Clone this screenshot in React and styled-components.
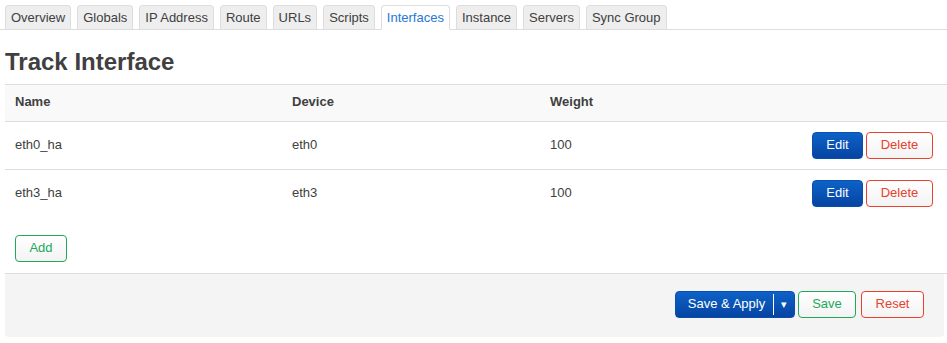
import styled, { createGlobalStyle } from 'styled-components';

const GlobalStyle = createGlobalStyle`
    body {
        margin: 0;
        background: #fff;
        font-family: "Liberation Sans", Arial, sans-serif;
        font-size: 13px;
        color: #404040;
    }
`;

const tabs = ['Overview', 'Globals', 'IP Address', 'Route', 'URLs', 'Scripts', 'Interfaces', 'Instance', 'Servers', 'Sync Group'];

const rows = [
    { name: 'eth0_ha', device: 'eth0', weight: '100' },
    { name: 'eth3_ha', device: 'eth3', weight: '100' },
];

const App = () => {
    return (
        <Page>
            <GlobalStyle />
            <TabBar>
                {tabs.map((t) => (
                    <Tab key={t} $active={t === 'Interfaces'}>{t}</Tab>
                ))}
            </TabBar>
            <Title>Track Interface</Title>
            <Table>
                <HeadRow>
                    <HeadCell>Name</HeadCell>
                    <HeadCell>Device</HeadCell>
                    <HeadCell>Weight</HeadCell>
                    <HeadCell />
                </HeadRow>
                {rows.map((r) => (
                    <Row key={r.name}>
                        <Cell>{r.name}</Cell>
                        <Cell>{r.device}</Cell>
                        <Cell>{r.weight}</Cell>
                        <Actions>
                            <Button $kind="primary" $w={51}>Edit</Button>
                            <Button $kind="negative" $w={67}>Delete</Button>
                        </Actions>
                    </Row>
                ))}
            </Table>
            <AddWrap>
                <Button $kind="positive" $w={52}>Add</Button>
            </AddWrap>
            <Footer>
                <SplitButton>
                    <SplitMain>Save &amp; Apply</SplitMain>
                    <SplitArrow>▾</SplitArrow>
                </SplitButton>
                <Button $kind="positive" $w={58}>Save</Button>
                <Button $kind="negative" $w={63}>Reset</Button>
            </Footer>
        </Page>
    );
};

export default App;

const Page = styled.div`
    padding: 5px 0 0 5px;
`;

const TabBar = styled.div`
    display: flex;
    gap: 6px;
    border-bottom: 1px solid #ddd;
    height: 24px;
    margin-left: -5px;
    padding-left: 5px;
`;

const Tab = styled.div`
    box-sizing: border-box;
    padding: 0 5px 1px;
    display: flex;
    align-items: center;
    border: 1px solid #ddd;
    border-bottom: ${(p) => (p.$active ? '1px solid #fff' : 'none')};
    border-radius: 4px 4px 0 0;
    background: ${(p) => (p.$active ? '#fff' : '#eee')};
    color: ${(p) => (p.$active ? '#2678d4' : '#404040')};
    font-size: 13px;
    line-height: 1;
    margin-bottom: ${(p) => (p.$active ? '-1px' : '0')};
    height: ${(p) => (p.$active ? '25px' : '24px')};
`;

const Title = styled.h2`
    margin: 0;
    padding: 18px 0 0;
    height: 54px;
    box-sizing: border-box;
    font-size: 24px;
    font-weight: bold;
    line-height: 28px;
    color: #404040;
`;

const Table = styled.div`
    border-top: 1px solid #ddd;
    margin-right: -3px;
`;

const HeadRow = styled.div`
    display: grid;
    grid-template-columns: 277px 258px 1fr auto;
    height: 35px;
    align-items: center;
    background: #f9f9f9;
    border-bottom: 1px solid #ddd;
    padding: 0 10px 1px;
`;

const HeadCell = styled.div`
    font-weight: bold;
    font-size: 13px;
    color: #404040;
    padding-bottom: 2px;
`;

const Row = styled.div`
    display: grid;
    grid-template-columns: 277px 258px 1fr auto;
    height: 47px;
    align-items: center;
    padding: 0 17px 0 10px;
    & + & {
        border-top: 1px solid #ddd;
    }
`;

const Cell = styled.div`
    font-size: 13px;
    color: #404040;
    padding-bottom: 2px;
`;

const Actions = styled.div`
    display: flex;
    gap: 3px;
`;

const kinds = {
    primary: `
        background: linear-gradient(#0d62c8, #0644a2);
        border: 1px solid #0a4fae;
        color: #fff;
    `,
    negative: `
        background: linear-gradient(#fff, #f3f3f3);
        border: 1px solid #e8412e;
        color: #e8412e;
    `,
    positive: `
        background: linear-gradient(#fff, #f3f3f3);
        border: 1px solid #21a95a;
        color: #21a95a;
    `,
};

const Button = styled.div`
    box-sizing: border-box;
    width: ${(p) => p.$w}px;
    height: 27px;
    display: flex;
    align-items: center;
    justify-content: center;
    border-radius: 4px;
    font-size: 13px;
    padding-bottom: 2px;
    ${(p) => kinds[p.$kind]}
`;

const AddWrap = styled.div`
    padding: 18px 10px 0;
    border-bottom: 1px solid #ddd;
    margin-right: -3px;
    height: 38px;
`;

const Footer = styled.div`
    margin: 0 3px 0 0;
    height: 63px;
    box-sizing: border-box;
    padding: 17px 20px 0 0;
    background: #f4f4f4;
    border-radius: 0 0 4px 4px;
    display: flex;
    justify-content: flex-end;
    align-items: flex-start;
    gap: 3px;
    & > :last-child {
        margin-left: 2px;
    }
`;

const SplitButton = styled.div`
    display: flex;
    height: 27px;
    width: 120px;
    box-sizing: border-box;
    border-radius: 4px;
    border: 1px solid #0a4fae;
    background: linear-gradient(#0d62c8, #0644a2);
    color: #fff;
    font-size: 13px;
`;

const SplitMain = styled.div`
    flex: 1;
    display: flex;
    align-items: center;
    justify-content: center;
    padding: 0 0 2px 4px;
    border-right: 1px solid #fff;
    margin: 2px 0;
`;

const SplitArrow = styled.div`
    width: 20px;
    display: flex;
    align-items: center;
    justify-content: center;
    font-size: 11px;
`;
